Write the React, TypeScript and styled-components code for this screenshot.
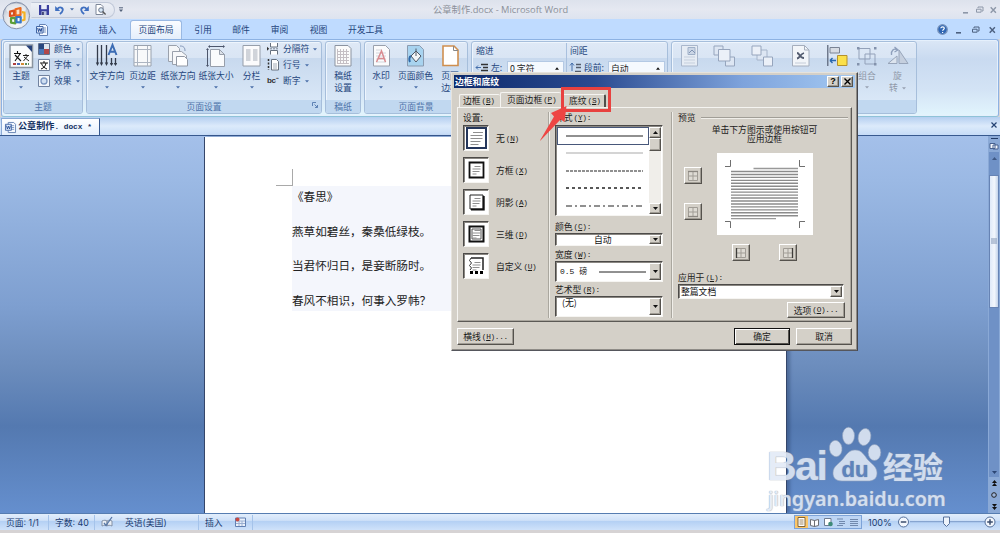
import React from 'react';
import styled, { createGlobalStyle, css } from 'styled-components';

const Global = createGlobalStyle`
  * { box-sizing: border-box; }
  body { margin: 0; overflow: hidden; background: #d8d6d8; }
  svg { display: block; flex: none; overflow: visible; }
`;

const cjk = `"Noto Sans CJK SC", sans-serif`;

/* ---------- window frame ---------- */
const Window = styled.div`
  position: relative;
  width: 1000px;
  height: 533px;
  display: flex;
  flex-direction: column;
  overflow: hidden;
  font: 8.8px/12px ${cjk};
  color: #24457c;
  white-space: nowrap;
`;
const TitleBar = styled.header`
  height: 19px;
  flex: none;
  display: flex;
  align-items: center;
  padding: 0 3px 0 31px;
  background: linear-gradient(#dde2ec, #e5e8f1 50%, #dde3ef);
`;
const QuickAccess = styled.div`
  width: 84px;
  height: 16px;
  display: flex;
  align-items: center;
  gap: 6px;
  padding: 0 7px;
  border: 1px solid #c0c8d8;
  border-left-color: transparent;
  border-radius: 0 9px 9px 0;
  background: linear-gradient(#edf0f6, #dde2ed);
`;
const TitleText = styled.div`
  margin-left: 306px;
  font: 9.3px/12px "Open Sans", ${cjk};
  color: #8b9099;
  width: 137px;
`;
const WindowButtons = styled.div<{ $gap: number }>`
  margin-left: auto;
  display: flex;
  align-items: center;
  gap: ${p => p.$gap}px;
`;
const Orb = styled.div`
  position: absolute;
  left: 2px;
  top: 1px;
`;
const TabBar = styled.nav`
  height: 20px;
  flex: none;
  display: flex;
  align-items: center;
  padding: 1px 4px 0 36px;
  background: #bfdbff;
`;
const RibbonTab = styled.div<{ $w: number; $active?: boolean }>`
  width: ${p => p.$w}px;
  height: 19px;
  line-height: 17px;
  text-align: center;
  border: 1px solid transparent;
  border-bottom: 0;
  ${p => p.$active && css`
    background: linear-gradient(#fafcff, #e4eefb);
    border-color: #9ab9e3;
    border-radius: 3px 3px 0 0;
  `}
`;

/* ---------- ribbon ---------- */
const Ribbon = styled.section`
  height: 78px;
  flex: none;
  display: flex;
  gap: 3px;
  margin: 0 1px;
  padding: 1px 2px 2px 1px;
  border: 1px solid #8db2e3;
  border-bottom-color: #8fc3d8;
  border-radius: 3px;
  background: linear-gradient(#dbe7f6, #c9daf0 25%, #d3e3f5 65%, #e2f5fd);
  box-shadow: inset 0 0 0 1px #e5f0fc;
`;
const Group = styled.div<{ $w: number }>`
  width: ${p => p.$w}px;
  height: 73px;
  flex: none;
  display: flex;
  flex-direction: column;
  border: 1px solid #a6bedb;
  border-radius: 3px;
  background: linear-gradient(#dfe9f6, #d9e5f4 22%, #c8d9ee 23%, #dbe9f8 90%);
  box-shadow: inset 1px 1px 0 #eef5fd;
  overflow: hidden;
`;
const GroupBody = styled.div<{ $pad?: number }>`
  flex: 1;
  display: flex;
  align-items: flex-start;
  padding: 1px 0 0 ${p => p.$pad || 0}px;
`;
const GroupLabel = styled.div`
  height: 13px;
  flex: none;
  display: flex;
  justify-content: center;
  position: relative;
  line-height: 13px;
  color: #4e74aa;
  background: #c1d8f0;
`;
const Launcher = styled.span`
  position: absolute;
  right: 3px;
  top: 2px;
`;
const BigButton = styled.div<{ $w: number; $muted?: boolean }>`
  width: ${p => p.$w}px;
  flex: none;
  display: flex;
  flex-direction: column;
  align-items: center;
  color: ${p => (p.$muted ? '#9099a8' : '#24457c')};
`;
const IconBox = styled.div`
  height: 26px;
  display: flex;
  align-items: center;
  margin-bottom: 1px;
`;
const SmallStack = styled.div`
  display: flex;
  flex-direction: column;
  gap: 4px;
`;
const SmallButton = styled.div`
  display: flex;
  align-items: center;
  height: 12px;
  gap: 4px;
`;
const ArrowGap = styled.div`
  height: 11px;
  display: flex;
  align-items: center;
`;
const SpacingBlock = styled.div<{ $w: number; $rule?: boolean }>`
  width: ${p => p.$w}px;
  height: 60px;
  padding: 2px 0 0 3px;
  border-left: 1px solid ${p => (p.$rule ? '#a9c0de' : 'transparent')};
`;
const FieldRow = styled.div`
  display: flex;
  align-items: center;
  margin-top: 4px;
  gap: 3px;
`;
const SpinField = styled.div`
  width: 57px;
  height: 13px;
  margin-left: auto;
  margin-right: 2px;
  display: flex;
  justify-content: space-between;
  align-items: center;
  padding: 2px 4px 0 2px;
  color: #222;
  background: #f5f9fe;
  border: 1px solid #b4c9e4;
`;

/* ---------- document tab strip ---------- */
const DocTabs = styled.div`
  height: 19px;
  flex: none;
  display: flex;
  align-items: flex-end;
  justify-content: space-between;
  padding: 0 3px 0 1px;
  border-bottom: 1px solid #37598f;
  background: linear-gradient(#b5cff0, #dceafb 50%, #c6dcf7);
`;
const DocTab = styled.div`
  width: 99px;
  height: 17px;
  display: flex;
  align-items: center;
  gap: 2px;
  padding-left: 3px;
  font: bold 9.1px/14px "Liberation Mono", ${cjk};
  color: #13305f;
  background: linear-gradient(#ffffff, #e4effd);
  border: 1px solid #8aa9d6;
  border-right: 1px solid #35588f;
  border-bottom: 0;
`;
const DocExt = styled.span`
  font-size: 7.8px;
  white-space: pre;
`;
const CloseDoc = styled.div`
  padding-bottom: 7px;
`;

/* ---------- workspace ---------- */
const Workspace = styled.main`
  flex: 1;
  display: flex;
  justify-content: space-between;
  padding-left: 204px;
  background: linear-gradient(#a4c0ea, #9bb9e4 12%, #7e9fd0 45%, #6c8dbd 61%, #5479b0 77%, #658fce);
`;
const Page = styled.article`
  width: 583px;
  margin-top: 1px;
  padding: 32px 0 0 71px;
  background: #fff;
  border-left: 1px solid #35466a;
  border-right: 1px solid #35466a;
  box-shadow: 3px 0 3px rgba(30, 50, 90, 0.35);
`;
const MarginMark = styled.div`
  width: 17px;
  height: 17px;
  border-right: 1px solid #a9a9a9;
  border-bottom: 1px solid #a9a9a9;
`;
const Poem = styled.div`
  width: 420px;
  height: 125px;
  margin-left: 16px;
  display: flex;
  flex-direction: column;
  gap: 14.7px;
  font: 11.6px/20px ${cjk};
  color: #222;
  background: #f4f6fc;
`;
const VScroll = styled.aside`
  width: 12px;
  display: flex;
  flex-direction: column;
  align-items: center;
  padding-top: 2px;
  background: #8aa9d6;
`;
const SplitHandle = styled.div`
  width: 7px;
  height: 1px;
  background: #223c68;
`;
const Track = styled.div`
  width: 10px;
  flex: 1;
  display: flex;
  flex-direction: column;
  align-items: center;
  justify-content: space-between;
  padding: 5px 0 3px;
  background: #6f91c6;
`;
const Thumb = styled.div`
  width: 10px;
  height: 133px;
  margin: 15px 0 auto;
  display: flex;
  flex-direction: column;
  align-items: center;
  justify-content: center;
  border: 1px solid #6683b4;
  background: linear-gradient(90deg, #dfe9f8, #f2f6fc 55%, #c3d3ea);
`;
const BrowseKeys = styled.div`
  height: 36px;
  width: 12px;
  display: flex;
  flex-direction: column;
  align-items: center;
  justify-content: space-around;
`;

/* ---------- status bar ---------- */
const StatusBar = styled.footer`
  height: 17px;
  flex: none;
  display: flex;
  align-items: center;
  color: #1b3c70;
  border-top: 1px solid #567db1;
  background: linear-gradient(#e2eefc, #cfe1f8 40%, #b4d0f4 45%, #cfe2fa);
`;
const StatusCell = styled.div<{ $w: number; $pad?: number }>`
  width: ${p => p.$w}px;
  height: 15px;
  display: flex;
  align-items: center;
  padding-left: ${p => p.$pad ?? 6}px;
  font: 8.8px/13px Inter, ${cjk};
  border-right: 1px solid #a5c3ea;
`;
const ViewButtons = styled.div`
  width: 68px;
  height: 14px;
  margin-left: auto;
  display: flex;
  align-items: center;
  border: 1px solid #7da3d8;
  background: #bdd5f4;
`;
const ViewButton = styled.div<{ $on?: boolean }>`
  flex: 1;
  height: 12px;
  display: flex;
  align-items: center;
  justify-content: center;
  background: ${p => (p.$on ? '#fbc66a' : 'transparent')};
`;
const ZoomArea = styled.div`
  width: 138px;
  display: flex;
  align-items: center;
  padding-left: 6px;
  font: 9px/13px Inter, sans-serif;
  gap: 5px;
`;
const BottomEdge = styled.div`
  height: 3px;
  flex: none;
  background: #d6d3d4;
`;

/* ---------- dialog ---------- */
const raised = css`
  border: 1px solid;
  border-color: #fff #55524d #55524d #fff;
  box-shadow: inset -1px -1px 0 #a09c94;
`;
const sunken = css`
  border: 1px solid;
  border-color: #4c4a48 #f6f5f2 #f6f5f2 #4c4a48;
  box-shadow: inset 1px 1px 0 #8a8782;
`;
const Dialog = styled.div`
  position: absolute;
  left: 451px;
  top: 72px;
  width: 407px;
  height: 279px;
  padding: 2px 2px 0;
  color: #1c1b1a;
  background: #d4d0c8;
  border: 1px solid;
  border-color: #e6e3dd #45464c #55565c #e6e3dd;
  box-shadow: inset -1px -1px 0 #8f8c87;
`;
const DialogTitle = styled.div`
  height: 13px;
  width: 401px;
  display: flex;
  align-items: center;
  gap: 2px;
  padding: 0 2px 0 1px;
  font-weight: 700;
  line-height: 12px;
  color: #fff;
  background: linear-gradient(90deg, #0d2a6c, #2a4a90 35%, #7ea3dc 72%, #a4c9f2);
`;
const DialogName = styled.span`
  margin-right: auto;
`;
const CaptionButton = styled.div`
  width: 12px;
  height: 11px;
  display: flex;
  align-items: center;
  justify-content: center;
  font: bold 9px/9px "Liberation Sans", sans-serif;
  color: #000;
  background: #d4d0c8;
  ${raised}
`;
const DialogTabs = styled.div`
  display: flex;
  align-items: flex-end;
  height: 19px;
  padding-left: 5px;
`;
const DialogTab = styled.div<{ $w: number; $active?: boolean; $last?: boolean }>`
  width: ${p => p.$w}px;
  height: ${p => (p.$active ? 15 : 13)}px;
  padding: ${p => (p.$active ? 1 : 0)}px 0 0 ${p => (p.$active ? 6 : p.$last ? 7 : 3)}px;
  line-height: 11px;
  border: 1px solid #f5f4f1;
  border-bottom: 0;
  border-right: ${p => (p.$last ? '2px solid #504e4b' : '0')};
  border-radius: 2px 2px 0 0;
`;
const Key = styled.span`
  margin-left: 1px;
  font: 7.8px/8px "Liberation Mono", monospace;
  letter-spacing: -0.35px;
  vertical-align: 1px;
`;
const Pane = styled.div`
  width: 395px;
  height: 215px;
  margin-left: 3px;
  display: flex;
  padding-top: 4px;
  border: 1px solid;
  border-color: #f5f4f1 #5b5955 #5b5955 #f5f4f1;
  box-shadow: inset -1px -1px 0 #aaa69e;
`;
const Column = styled.div<{ $w: number; $pad: number; $rule?: boolean }>`
  width: ${p => p.$w}px;
  height: 206px;
  padding-left: ${p => p.$pad}px;
  line-height: 11px;
  border-right: ${p => (p.$rule ? '1px solid #aaa79f' : '0')};
  box-shadow: ${p => (p.$rule ? '1px 0 0 #f0eee9' : 'none')};
`;
const FieldLabel = styled.div<{ $h?: number }>`
  height: ${p => p.$h || 11}px;
  line-height: 11px;
`;
const SettingRow = styled.div`
  display: flex;
  align-items: center;
  gap: 7px;
  height: 32px;
`;
const SettingIcon = styled.div`
  width: 26px;
  height: 26px;
  display: flex;
  align-items: center;
  justify-content: center;
  background: #fff;
  ${sunken}
`;
const ListBox = styled.div`
  width: 108px;
  height: 91px;
  display: flex;
  margin: 2px 0 5px;
  padding: 1px;
  background: #fff;
  ${sunken}
`;
const StyleList = styled.div`
  flex: 1;
  display: flex;
  flex-direction: column;
`;
const StyleItem = styled.div<{ $selected?: boolean }>`
  height: 17.5px;
  flex: none;
  display: flex;
  align-items: center;
  justify-content: center;
  padding-left: 3px;
  border: 1px solid ${p => (p.$selected ? '#47577a' : 'transparent')};
`;
const ListScroll = styled.div`
  width: 12px;
  display: flex;
  flex-direction: column;
  background: #f0eeea;
`;
const ScrollPart = styled.div<{ $h: number; $bottom?: boolean }>`
  height: ${p => p.$h}px;
  margin-top: ${p => (p.$bottom ? 'auto' : '0')};
  display: flex;
  align-items: center;
  justify-content: center;
  background: #d4d0c8;
  ${raised}
`;
const Combo = styled.div<{ $w: number; $h: number; $mb?: number }>`
  width: ${p => p.$w}px;
  height: ${p => p.$h}px;
  margin: 1px 0 ${p => p.$mb || 0}px;
  display: flex;
  padding: 1px;
  color: #111;
  background: #fff;
  ${sunken}
`;
const ComboValue = styled.div<{ $pad: number; $top?: boolean }>`
  flex: 1;
  display: flex;
  align-items: ${p => (p.$top ? 'flex-start' : 'center')};
  padding-left: ${p => p.$pad}px;
  line-height: 10px;
`;
const ComboButton = styled.div`
  width: 12px;
  display: flex;
  align-items: center;
  justify-content: center;
  background: #d4d0c8;
  ${raised}
`;
const WidthText = styled.span`
  font: 8px/10px "Liberation Mono", ${cjk};
  margin-right: 12px;
`;
const PreviewHead = styled.div`
  display: flex;
  align-items: center;
  gap: 5px;
  width: 170px;
`;
const Rule = styled.div`
  flex: 1;
  height: 2px;
  border-top: 1px solid #a19e97;
  border-bottom: 1px solid #f0eee9;
`;
const Hint = styled.div`
  width: 170px;
  margin-top: 2px;
  text-align: center;
  line-height: 9px;
  padding-left: 3px;
`;
const PreviewGrid = styled.div`
  display: grid;
  grid-template-columns: 39px 96px;
  margin: 10px 0 0;
`;
const SideButtons = styled.div`
  display: flex;
  flex-direction: column;
  gap: 19px;
  padding: 14px 0 0 6px;
`;
const EdgeButton = styled.div`
  width: 18px;
  height: 17px;
  display: flex;
  align-items: center;
  justify-content: center;
  ${raised}
`;
const Sheet = styled.div`
  width: 96px;
  height: 82px;
  background: #fff;
`;
const BelowButtons = styled.div`
  grid-column: 2;
  display: flex;
  gap: 29px;
  padding: 9px 0 0 15px;
`;
const ApplyLabel = styled.div`
  height: 11px;
  margin-top: 11px;
`;
const PushButton = styled.div<{ $w: number; $h: number; $default?: boolean }>`
  width: ${p => p.$w}px;
  height: ${p => p.$h}px;
  display: flex;
  align-items: center;
  justify-content: center;
  line-height: 11px;
  ${raised}
  ${p => p.$default && css`
    border-color: #111;
    box-shadow: inset 1px 1px 0 #fff, inset -1px -1px 0 #55524d;
  `}
`;
const OptionsRow = styled.div`
  display: flex;
  justify-content: flex-end;
  width: 167px;
  margin-top: 3px;
`;
const DialogFooter = styled.div`
  display: flex;
  gap: 6px;
  padding: 6px 0 0 3px;
`;
const FooterSpace = styled.div`
  flex: 0 0 208px;
`;

/* ---------- overlays ---------- */
const Highlight = styled.div`
  position: absolute;
  left: 561px;
  top: 87px;
  width: 50px;
  height: 25px;
  border: 3px solid #e8413f;
`;
const Pointer = styled.div`
  position: absolute;
  left: 538px;
  top: 104px;
`;
const Watermark = styled.div`
  position: absolute;
  left: 767px;
  top: 420px;
  width: 184px;
  color: #e2eaf6;
  opacity: 0.88;
  text-shadow: 0 0 1px #8f9cb0, 0 0 1px #a9b3c2;
`;
const BrandRow = styled.div`
  display: flex;
  align-items: flex-end;
  height: 62px;
`;
const BrandLatin = styled.span`
  width: 62px;
  font: bold 41px/44px "Liberation Sans", sans-serif;
  letter-spacing: -1.5px;
  margin-bottom: -6px;
`;
const BrandHan = styled.span`
  margin-left: 2px;
  font: bold 30px/34px ${cjk};
`;
const BrandUrl = styled.div`
  padding-left: 1px;
  font: 600 19.8px/24px "Noto Sans", sans-serif;
  margin-top: 5px;
`;

/* ---------- drawings ---------- */
const Caret = ({ c = '#4a6ea8' }: { c?: string }) => (
  <svg width="4" height="3" viewBox="0 0 4 3"><path d="M0 .3h4L2 2.6z" fill={c} /></svg>
);
const Tri = ({ up, w = 5, c = '#111' }: { up?: boolean; w?: number; c?: string }) => (
  <svg width={w} height="3" viewBox="0 0 5 3"><path d={up ? 'M0 3h5L2.5 0z' : 'M0 0h5L2.5 3z'} fill={c} /></svg>
);
const MinMaxClose = ({ c, gap }: { c: string; gap: number }) => (
  <>
    <svg width="6" height="8"><path d="M0 6.8h5" stroke={c} strokeWidth="1.6" /></svg>
    <svg width="7" height="8" fill="none" stroke={c} style={{ marginLeft: gap }}><path d="M2 2V1h5v4H6" /><path d="M.5 3.2h4.6v3H.5z" /></svg>
    <svg width="7" height="8" stroke={c} strokeWidth="1.4" style={{ marginLeft: gap }}><path d="M.7 1.2l5.2 5.6M5.9 1.2L.7 6.8" /></svg>
  </>
);
const OfficeOrb = () => (
  <svg width="29" height="29" viewBox="0 0 29 29">
    <defs>
      <radialGradient id="orb" cx=".5" cy=".75" r=".75">
        <stop offset="0" stopColor="#fff" /><stop offset=".6" stopColor="#dde1e8" /><stop offset="1" stopColor="#a9b2c2" />
      </radialGradient>
    </defs>
    <circle cx="14.3" cy="14.5" r="13.3" fill="url(#orb)" stroke="#8692ab" strokeWidth="1" />
    <ellipse cx="14" cy="8" rx="10" ry="5.5" fill="#fff" opacity=".55" />
    <g fill="none" strokeWidth="2.2" strokeLinejoin="round">
      <path d="M13.500 8.200l5-1.200v7l-5 .8z" stroke="#ec6a1e" fill="#fbe0c8" />
      <path d="M8 10.600l4-1v4.800l-4 .6z" stroke="#d9501e" />
      <path d="M9 17.200h4.300v5.200L9 21.600z" stroke="#5d9f37" />
      <path d="M14.500 16h4.200v5.400l-4.200-.2z" stroke="#3977c6" />
      <path d="M19.800 11.200l2.700.5v7l-2.500.8" stroke="#f4b324" />
    </g>
  </svg>
);
const SaveIcon = () => (
  <svg width="10" height="10"><path d="M0 0h10v10H0z" fill="#3a3f9e" /><path d="M2.200 0h5.600v4.200H2.200z" fill="#e9edf8" /><path d="M2.500 6.200h5V10h-5z" fill="#b9c2dd" /><path d="M3.200 7h1.500v3H3.200z" fill="#22265f" /></svg>
);
const UndoIcon = ({ flip }: { flip?: boolean }) => (
  <svg width="9" height="10" viewBox="0 0 9 10"><g transform={flip ? 'translate(9 0) scale(-1 1)' : undefined}><path d="M2.200 4.200C4.600 1 8.400 2.600 7.700 5.400 7.400 7 6.300 8 4.800 9" fill="none" stroke="#3f6fc0" strokeWidth="1.800" /><path d="M.200 1v5h5z" fill="#3f6fc0" /></g></svg>
);
const PreviewIcon = () => (
  <svg width="11" height="11"><path d="M1 .500h5l2 2v8H1z" fill="#fff" stroke="#7d8799" /><circle cx="6" cy="6" r="2.300" fill="#d9e9f7" stroke="#69758b" /><path d="M7.600 7.600l3 2.800" stroke="#555" strokeWidth="1.400" /></svg>
);
const WordIcon = ({ s = 12 }: { s?: number }) => (
  <svg width={s} height={s} viewBox="0 0 12 12"><path d="M3.500.500h6l2 2v9h-8z" fill="#f5f9ff" stroke="#6482b4" /><path d="M7 4h3M7 6h3M7 8h3" stroke="#7d99c4" /><path d="M.500 2.500h6.500v6.500H.5z" fill="#e1ecfb" stroke="#4267a6" /><path d="M1.700 4l.9 3.600 1.200-3 1.200 3L5.900 4" fill="none" stroke="#244a92" strokeWidth="1" /></svg>
);
const ThemeIcon = () => (
  <svg width="25" height="25"><path d="M1 1h22.500v22.500H1z" fill="#fbfcfd" stroke="#8a949f" strokeWidth="1.500" /><path d="M17 1.500h6V8z" fill="#27427b" /><path d="M5 9.500h7M8.500 7v2.500M6 17l5-7M6 11l6 6" stroke="#111" fill="none" strokeWidth="1.100" /><path d="M14 11.500h6M17 10v1.500M14.500 17l4-5M15 13l5 4" stroke="#222" fill="none" /><path d="M4 20h3" stroke="#b04040" strokeWidth="2" /><path d="M8 20h3" stroke="#476bb5" strokeWidth="2" /><path d="M12 20h3" stroke="#d38a34" strokeWidth="2" /><path d="M16 20h4" stroke="#5c8f5c" strokeWidth="2" strokeDasharray="2 1" /></svg>
);
const ColorsIcon = () => (
  <svg width="12" height="12"><path d="M.500.500h11v11H.5z" fill="#fff" stroke="#61718f" /><path d="M1 1h5v5H1z" fill="#28477f" /><path d="M6 1h5v5H6z" fill="#dfe6ee" /><path d="M1 6h5v5H1z" fill="#4978b8" /><path d="M6 6h5v5H6z" fill="#b2474a" /></svg>
);
const FontsIcon = () => (
  <svg width="12" height="12"><path d="M.500.500h11v11H.5z" fill="#fff" stroke="#71829f" /><path d="M2 4h8M6 2v2M3 10c3-1 4.500-3 5-6M3.500 4.500c1 3 3 4.500 5.500 5.500" fill="none" stroke="#111" /></svg>
);
const EffectsIcon = () => (
  <svg width="12" height="12"><path d="M.500.500h11v11H.5z" fill="#f2f6fb" stroke="#71829f" /><circle cx="6" cy="6" r="3" fill="#cfdff2" stroke="#7894bf" strokeWidth="1.300" /></svg>
);
const DirectionIcon = () => (
  <svg width="22" height="24"><path d="M1.500 1v18M5.500 1v18M10.500 1v18M15.500 14v7M19.500 14v7" stroke="#333b4a" strokeWidth="1.300" /><path d="M-.2 18.500h3.400L1.500 22zM3.800 18.500h3.400L5.500 22zM8.800 18.500h3.400L10.500 22zM13.800 19h3.400l-1.700 3zM17.800 19h3.400l-1.700 3z" fill="#333b4a" /><path d="M12.500 11L16.500 1l4 10M14 7.800h5" fill="none" stroke="#3d6db4" strokeWidth="2" /></svg>
);
const MarginsIcon = () => (
  <svg width="19" height="22"><path d="M1 .500h17v20.500H1z" fill="#f8f9fa" stroke="#9aa2ae" /><path d="M4.500 1v20M14.500 1v20M1 4.500h17M1 17.500h17" stroke="#adb5c1" /></svg>
);
const OrientIcon = () => (
  <svg width="22" height="22"><path d="M1.500.500h8l3 3v13h-11z" fill="#f4f6f8" stroke="#9aa1ac" /><path d="M5.500 6.500h9l5 4v9h-14z" fill="#f7f8fa" stroke="#9aa1ac" /><path d="M9.500 11.500h8l3 3v6.500h-11z" fill="#fff" stroke="#9299a5" /><path d="M13 1c4 0 5 2 5 5" fill="none" stroke="#8497b8" /></svg>
);
const SizeIcon = () => (
  <svg width="20" height="23"><path d="M4 1.500h14M1.500 4v17" stroke="#4c566c" /><path d="M2 1.500l2-1.500v3zM19 1.500L17 0v3zM1.500 3L0 5h3zM1.500 22L0 20h3z" fill="#4c566c" /><path d="M4.500 4.500h9l5 5v12h-14z" fill="#fafbfc" stroke="#979eaa" /><path d="M13.500 4.500v5h5z" fill="#dce1e8" stroke="#979eaa" /></svg>
);
const ColumnsIcon = () => (
  <svg width="19" height="22"><path d="M1 .500h17v20.500H1z" fill="#fbfbfc" stroke="#969eaa" /><path d="M4 5h4.500M4 7h4.500M4 9h4.500M4 11h4.500M4 13h4.500M4 15h4.500M11 5h4.500M11 7h4.500M11 9h4.500M11 11h4.500M11 13h4.500M11 15h4.500" stroke="#a6adb8" /></svg>
);
const BreakIcon = () => (
  <svg width="12" height="12"><path d="M3.500 0v4h7V0M3.500 11.500V7.500h7v4" fill="#fff" stroke="#66717f" /><path d="M3 5.800h9" stroke="#7f8895" strokeDasharray="2 1" /><path d="M0 3.800v4l2.200-2z" fill="#333" /></svg>
);
const LineNoIcon = () => (
  <svg width="12" height="12"><path d="M4.500.500h5l2 2v8.500h-7z" fill="#fff" stroke="#66717f" /><path d="M6 5h4M6 7h4M6 9h4" stroke="#a4adb9" /><path d="M1.500 0v11" stroke="#333" strokeDasharray="2 1.500" strokeWidth="1.500" /></svg>
);
const Hyphen = styled.span`
  width: 12px;
  font: bold 8px/10px "Liberation Sans", sans-serif;
  letter-spacing: -0.4px;
  color: #333;
`;
const GridPaperIcon = () => (
  <svg width="18" height="22"><path d="M1 .500h13l3 3v17.500H1z" fill="#fbfbfb" stroke="#8b93a0" /><path d="M3 6.500h12M3 9.500h12M3 12.500h12M3 15.500h12M3 18.500h12M3.500 4v14M6.500 4v14M9.500 4v14M12.500 4v14" stroke="#c5bfc4" /></svg>
);
const WatermarkIcon = () => (
  <svg width="17" height="22"><path d="M.500.500h12l4 4v16.500H.5z" fill="#fbfbfc" stroke="#99a0ac" /><path d="M3 5h6M3 8h10M3 11h10M3 14h10M3 17h10" stroke="#d1d5da" /><path d="M3.500 17L8.500 6l4 11M5 13.500h6" fill="none" stroke="#d98b90" strokeWidth="1.500" /></svg>
);
const PageColorIcon = () => (
  <svg width="17" height="22"><path d="M.500.500h12l4 4v16.500H.5z" fill="#a8d3ef" stroke="#8b9bb0" /><path d="M4 11l5-5 5 5-5 6z" fill="#f3f5f7" stroke="#4f5866" /><path d="M9 11V3.500" stroke="#4f5866" /><path d="M4 11c-2 1-2 4-1 6" stroke="#2e68a8" strokeWidth="2" fill="none" /></svg>
);
const BorderPageIcon = () => (
  <svg width="17" height="22"><path d="M1 1h11l4 4v15.500H1z" fill="#fff" stroke="#cf8f4f" strokeWidth="1.600" /><path d="M11.500 1v4.500H16" fill="none" stroke="#888" /></svg>
);
const IndentIcon = () => (
  <svg width="12" height="10"><path d="M5 1.500h7M7 4.500h5M5 7.500h7" stroke="#333" strokeWidth="1.600" /><path d="M0 4.500h5M0 4.500l2-2M0 4.500l2 2" stroke="#456fab" /></svg>
);
const BeforeIcon = () => (
  <svg width="11" height="10"><path d="M6 1.500h5M6 4.500h5M5 8.500h6" stroke="#555d6b" strokeWidth="1.600" /><path d="M2 0v8M2 0L0 2.500M2 0l2 2.500" stroke="#456fab" fill="none" /></svg>
);
const PositionIcon = () => (
  <svg width="17" height="22"><path d="M.500.500h16v20.500H.5z" fill="#e6ecf4" stroke="#a9b7cc" /><path d="M7 2.500h7v7H7z" fill="#cbd6e6" stroke="#9fb0c8" /><path d="M8 8l3-3 3 3" stroke="#8093b2" fill="none" /><path d="M3 12h11M3 15h11M3 18h11" stroke="#c5cfdd" /></svg>
);
const StackIcon = () => (
  <svg width="23" height="23"><path d="M1 1h9v9H1zM12.500 12h9v9h-9z" fill="#dde6f3" stroke="#96a5bd" /><path d="M5.500 4.500h11.500v11.500H5.500z" fill="#ebf0f8" stroke="#96a5bd" /></svg>
);
const BackIcon = () => (
  <svg width="23" height="23"><path d="M6 5h10v10H6z" fill="#dde6f3" stroke="#a6b4ca" /><path d="M1 1h9v9H1zM12.500 12h9v9h-9z" fill="#ebf0f8" stroke="#96a5bd" /></svg>
);
const WrapIcon = () => (
  <svg width="18" height="22"><path d="M.500.500h12l4.500 4.500v16H.5z" fill="#f2f5f9" stroke="#a5aebd" /><path d="M12.500.500V5H17" fill="none" stroke="#a5aebd" /><path d="M5 8c3 0 2 5 7 5M5 13.500C8 13 8 9 12 8" stroke="#535c70" strokeWidth="1.800" fill="none" /><path d="M3 18h11" stroke="#c4ccd8" /></svg>
);
const AlignIcon = () => (
  <svg width="21" height="22"><path d="M.800 0v21" stroke="#555f73" strokeWidth="1.200" /><path d="M3 2.500h9.500v5.500H3z" fill="#d7dce4" stroke="#7a8394" /><path d="M10.500 10.500h9.500v10h-9.500z" fill="#fbe04a" stroke="#b4912c" /><path d="M3 15.500h6M3 15.500l2.500-2.500M3 15.500l2.500 2.500" stroke="#2a67ad" strokeWidth="1.400" /></svg>
);
const GroupIcon = () => (
  <svg width="20" height="21"><path d="M2 2.500h11v10.500H2zM8 8h10v10H8z" fill="none" stroke="#93a1b9" /><path d="M0 1h2.500v2.500H0zM17 1h2.500v2.500H17zM0 17h2.500v2.500H0zM17 17h2.500v2.500H17z" fill="#8392ac" /></svg>
);
const RotateIcon = () => (
  <svg width="22" height="21"><path d="M1 17.500L10 10v7.500z" fill="#dce4ee" stroke="#98a5ba" /><path d="M12 17.500V4l9 13.500z" fill="#c5cfde" stroke="#98a5ba" /><path d="M4.500 9C4 4 7 2 10.500 4M7.500 1l3.500 3-3.500 2" stroke="#8fa0bc" fill="none" strokeWidth="1.300" /></svg>
);
const HelpIcon = () => (
  <svg width="11" height="11"><circle cx="5.500" cy="5.500" r="4.800" fill="#2f66b4" stroke="#7b96be" strokeWidth="1.300" /><path d="M3.800 4.300c.2-2 3.500-2 3.500 0 0 1.100-1.700 1.300-1.700 2.500M5.600 8v1.100" stroke="#fff" strokeWidth="1.200" fill="none" /></svg>
);
const SettingArt = ({ kind }: { kind: number }) => (
  <svg width="19" height="20" viewBox="0 0 19 20" fill="none">
    {kind === 0 && <path d="M0 0h19v20H0z" stroke="#24365b" strokeWidth="2" />}
    {kind === 1 && <path d="M2.500 2.500h14v15h-14z" stroke="#111" strokeWidth="1.800" />}
    {kind === 2 && <><path d="M3 3h13v14H3z" stroke="#222" /><path d="M4 17.500h12.700V4" stroke="#111" strokeWidth="2" /></>}
    {kind === 3 && <><path d="M2.500 2.500h14v15h-14z" stroke="#111" strokeWidth="2" /><path d="M5 5h9v10H5z" stroke="#555" /></>}
    {kind === 4 && <><path d="M4 2h12v12" stroke="#222" strokeWidth="1.500" /><path d="M4 2L2.500 4.500 4.500 7 2.500 9.500 4.500 12 3 14" stroke="#333" /><path d="M3 16.500h14" stroke="#000" strokeWidth="3" strokeDasharray="3 2" /></>}
    <path d={kind === 0 ? 'M6 4.500h10M3.500 7.500h12M3.500 10.500h12M3.500 13.500h10M3.500 16.500h8' : 'M7.500 6.500h6M5.500 9h8M5.500 11.500h7M5.500 14h4'} stroke="#8f8f8f" strokeWidth="1.100" />
  </svg>
);
const EdgeArt = ({ side }: { side: 't' | 'b' | 'l' | 'r' }) => {
  const strong = { t: 'M0 .500h10', b: 'M0 9.500h10', l: 'M.500 0v10', r: 'M9.500 0v10' }[side];
  const vertical = side === 'l' || side === 'r';
  return (
    <svg width="10" height="10"><path d="M.500.500h9v9h-9zM5 1v8M1 5h8" fill="#dedbd4" stroke="#a19d96" /><path d={strong} stroke={vertical ? '#3f3d3a' : '#8b8781'} strokeWidth="1.300" /></svg>
  );
};
const SheetArt = () => (
  <svg width="96" height="82" stroke="#6f6f6f">
    <path d="M8 13.500h5.500V7M88 13.500h-5.500V7M8 68.500h5.500V75M88 68.500h-5.500V75" fill="none" />
    <path d="M36.500 15.500H81" stroke="#999" strokeWidth="1.300" />
    {Array.from({ length: 16 }, (_, i) => (
      <path key={i} d={`M14 ${18.5 + i * 2.95}H81`} stroke="#8b8b8b" strokeWidth="1.400" />
    ))}
    <path d="M14 65.700H59" stroke="#999" strokeWidth="1.300" />
  </svg>
);
const Paw = () => (
  <svg width="52" height="57" viewBox="0 0 52 57">
    <g fill="#e2eaf6" stroke="#98a6bd" strokeWidth=".6">
      <ellipse cx="6.700" cy="23.500" rx="6.300" ry="8.200" transform="rotate(-8 6.700 23.500)" />
      <ellipse cx="19.500" cy="10.800" rx="6" ry="8.600" />
      <ellipse cx="35.500" cy="12" rx="6.300" ry="8.600" transform="rotate(12 35.500 12)" />
      <ellipse cx="45.500" cy="27.500" rx="6.300" ry="8" />
      <path d="M26 25c7 0 9 5 13 10 4 4 9 7 9 13s-4 8-9 8H13c-6 0-9-3-9-8 0-7 6-9 10-14 3-4 6-9 12-9z" />
    </g>
    <text x="26" y="52" textAnchor="middle" fontFamily="Liberation Sans" fontWeight="700" fontSize="22" fill="#5f84bd">du</text>
  </svg>
);

/* ---------- data ---------- */
const settings: [string, string][] = [['无', 'N'], ['方框', 'X'], ['阴影', 'A'], ['三维', 'D'], ['自定义', 'U']];
const dashes = ['none', 'none', '3 1', '3 3', '6 3 2 3'];
const poem = ['《春思》', '燕草如碧丝，秦桑低绿枝。', '当君怀归日，是妾断肠时。', '春风不相识，何事入罗帏？'];

const Mnemonic = ({ k, tail = '' }: { k: string; tail?: string }) => <Key>(<u>{k}</u>){tail}</Key>;

const Big = ({ w, icon, text, second, muted }: { w: number; icon: React.ReactNode; text?: string; second?: React.ReactNode; muted?: boolean }) => (
  <BigButton $w={w} $muted={muted}>
    <IconBox>{icon}</IconBox>
    {text && <span>{text}</span>}
    {second}
    {text && !second && <ArrowGap><Caret c={muted ? '#98a2b3' : undefined} /></ArrowGap>}
  </BigButton>
);

function RibbonBar() {
  return (
    <Ribbon>
      <Group $w={80}>
        <GroupBody>
          <Big w={34} icon={<ThemeIcon />} text="主题" />
          <SmallStack>
            <SmallButton><ColorsIcon />颜色<Caret /></SmallButton>
            <SmallButton><FontsIcon />字体<Caret /></SmallButton>
            <SmallButton><EffectsIcon />效果<Caret /></SmallButton>
          </SmallStack>
        </GroupBody>
        <GroupLabel>主题</GroupLabel>
      </Group>
      <Group $w={236}>
        <GroupBody $pad={2}>
          <Big w={36} icon={<DirectionIcon />} text="文字方向" />
          <Big w={35} icon={<MarginsIcon />} text="页边距" />
          <Big w={36} icon={<OrientIcon />} text="纸张方向" />
          <Big w={40} icon={<SizeIcon />} text="纸张大小" />
          <Big w={31} icon={<ColumnsIcon />} text="分栏" />
          <SmallStack>
            <SmallButton><BreakIcon />分隔符<Caret /></SmallButton>
            <SmallButton><LineNoIcon />行号<Caret /></SmallButton>
            <SmallButton><Hyphen>bc⁻</Hyphen>断字<Caret /></SmallButton>
          </SmallStack>
        </GroupBody>
        <GroupLabel>页面设置<Launcher><svg width="6" height="6"><path d="M.500 4V.500H4M2.500 2.500l3 3M5.500 3v2.500H3" fill="none" stroke="#5f83b5" /></svg></Launcher></GroupLabel>
      </Group>
      <Group $w={36}>
        <GroupBody><Big w={34} icon={<GridPaperIcon />} text="稿纸" second={<span>设置</span>} /></GroupBody>
        <GroupLabel>稿纸</GroupLabel>
      </Group>
      <Group $w={104}>
        <GroupBody>
          <Big w={32} icon={<WatermarkIcon />} text="水印" />
          <Big w={37} icon={<PageColorIcon />} text="页面颜色" />
          <Big w={32} icon={<BorderPageIcon />} text="页面" second={<span>边框</span>} />
        </GroupBody>
        <GroupLabel>页面背景</GroupLabel>
      </Group>
      <Group $w={197}>
        <GroupBody>
          <SpacingBlock $w={94}>
            缩进
            <FieldRow><IndentIcon /> 左:<SpinField>0 字符<Tri up w={4} /></SpinField></FieldRow>
          </SpacingBlock>
          <SpacingBlock $w={101} $rule>
            间距
            <FieldRow><BeforeIcon /> 段前:<SpinField>自动<Tri up w={4} /></SpinField></FieldRow>
          </SpacingBlock>
        </GroupBody>
        <GroupLabel>段落</GroupLabel>
      </Group>
      <Group $w={246}>
        <GroupBody>
          <Big w={34} icon={<PositionIcon />} />
          <Big w={36} icon={<StackIcon />} />
          <Big w={40} icon={<BackIcon />} />
          <Big w={38} icon={<WrapIcon />} />
          <Big w={34} icon={<AlignIcon />} />
          <Big w={26} icon={<GroupIcon />} text="组合" muted />
          <Big w={35} icon={<RotateIcon />} text="旋" muted second={<SmallButton>转<Caret c="#98a2b3" /></SmallButton>} />
        </GroupBody>
        <GroupLabel>排列</GroupLabel>
      </Group>
    </Ribbon>
  );
}

function BordersDialog() {
  return (
    <Dialog>
      <DialogTitle>
        <DialogName>边框和底纹</DialogName>
        <CaptionButton>?</CaptionButton>
        <CaptionButton><svg width="7" height="7" stroke="#000" strokeWidth="1.400"><path d="M.500.500l6 6M6.500.500l-6 6" /></svg></CaptionButton>
      </DialogTitle>
      <DialogTabs>
        <DialogTab $w={41}>边框<Mnemonic k="B" /></DialogTab>
        <DialogTab $w={61} $active>页面边框<Mnemonic k="P" /></DialogTab>
        <DialogTab $w={45} $last>底纹<Mnemonic k="S" /></DialogTab>
      </DialogTabs>
      <Pane>
        <Column $w={91} $pad={5} $rule>
          <FieldLabel $h={10}>设置:</FieldLabel>
          {settings.map(([label, key], i) => (
            <SettingRow key={key}>
              <SettingIcon><SettingArt kind={i} /></SettingIcon>
              <span>{label}<Mnemonic k={key} /></span>
            </SettingRow>
          ))}
        </Column>
        <Column $w={123} $pad={6} $rule>
          <FieldLabel>样式<Mnemonic k="Y" tail=":" /></FieldLabel>
          <ListBox>
            <StyleList>
              {dashes.map((d, i) => (
                <StyleItem key={i} $selected={i === 0}>
                  <svg width="77" height="2"><path d="M0 1h77" stroke={i === 1 ? '#aaa' : '#222'} strokeWidth={i === 3 ? 1.4 : 1.1} strokeDasharray={d} /></svg>
                </StyleItem>
              ))}
            </StyleList>
            <ListScroll>
              <ScrollPart $h={11}><Tri up /></ScrollPart>
              <ScrollPart $h={13} />
              <ScrollPart $h={11} $bottom><Tri /></ScrollPart>
            </ListScroll>
          </ListBox>
          <FieldLabel>颜色<Mnemonic k="C" tail=":" /></FieldLabel>
          <Combo $w={108} $h={13} $mb={3}><ComboValue $pad={37}>自动</ComboValue><ComboButton><Tri /></ComboButton></Combo>
          <FieldLabel>宽度<Mnemonic k="W" tail=":" /></FieldLabel>
          <Combo $w={108} $h={21} $mb={2}>
            <ComboValue $pad={3}><WidthText>0.5 磅</WidthText><svg width="47" height="2"><path d="M0 1h47" stroke="#222" /></svg></ComboValue>
            <ComboButton><Tri /></ComboButton>
          </Combo>
          <FieldLabel>艺术型<Mnemonic k="R" tail=":" /></FieldLabel>
          <Combo $w={108} $h={21}><ComboValue $pad={5} $top>(无)</ComboValue><ComboButton><Tri /></ComboButton></Combo>
        </Column>
        <Column $w={178} $pad={6}>
          <PreviewHead>预览<Rule /></PreviewHead>
          <Hint>单击下方图示或使用按钮可<br />应用边框</Hint>
          <PreviewGrid>
            <SideButtons><EdgeButton><EdgeArt side="t" /></EdgeButton><EdgeButton><EdgeArt side="b" /></EdgeButton></SideButtons>
            <Sheet><SheetArt /></Sheet>
            <BelowButtons><EdgeButton><EdgeArt side="l" /></EdgeButton><EdgeButton><EdgeArt side="r" /></EdgeButton></BelowButtons>
          </PreviewGrid>
          <ApplyLabel>应用于<Mnemonic k="L" tail=":" /></ApplyLabel>
          <Combo $w={166} $h={15}><ComboValue $pad={1}>整篇文档</ComboValue><ComboButton><Tri /></ComboButton></Combo>
          <OptionsRow><PushButton $w={58} $h={16}>选项<Mnemonic k="O" tail="..." /></PushButton></OptionsRow>
        </Column>
      </Pane>
      <DialogFooter>
        <PushButton $w={57} $h={17}>横线<Mnemonic k="H" tail="..." /></PushButton>
        <FooterSpace />
        <PushButton $w={56} $h={17} $default>确定</PushButton>
        <PushButton $w={56} $h={17}>取消</PushButton>
      </DialogFooter>
    </Dialog>
  );
}

export default function App() {
  return (
    <Window>
      <Global />
      <TitleBar>
        <QuickAccess><SaveIcon /><UndoIcon /><Caret /><UndoIcon flip /><PreviewIcon /></QuickAccess>
        <svg width="12" height="6"><path d="M4 .800h4" stroke="#526079" /><path d="M4 2.500h4L6 5z" fill="#526079" /></svg>
        <TitleText>公章制作.docx - Microsoft Word</TitleText>
        <WindowButtons $gap={0}><MinMaxClose c="#8d97a8" gap={7} /></WindowButtons>
      </TitleBar>
      <TabBar>
        <WordIcon />
        <RibbonTab $w={41}>开始</RibbonTab>
        <RibbonTab $w={37}>插入</RibbonTab>
        <RibbonTab $w={4} />
        <RibbonTab $w={52} $active>页面布局</RibbonTab>
        <RibbonTab $w={42}>引用</RibbonTab>
        <RibbonTab $w={34}>邮件</RibbonTab>
        <RibbonTab $w={43}>审阅</RibbonTab>
        <RibbonTab $w={35}>视图</RibbonTab>
        <RibbonTab $w={59}>开发工具</RibbonTab>
        <WindowButtons $gap={0}><HelpIcon /><svg width="8" height="8" /><MinMaxClose c="#4c607f" gap={10} /></WindowButtons>
      </TabBar>
      <RibbonBar />
      <DocTabs>
        <DocTab><WordIcon s={11} /><span>公章制作<DocExt>. docx *</DocExt></span></DocTab>
        <CloseDoc><svg width="6" height="6" stroke="#234273" strokeWidth="1.200"><path d="M.500.500l5 5M5.500.500l-5 5" /></svg></CloseDoc>
      </DocTabs>
      <Workspace>
        <Page>
          <MarginMark />
          <Poem>{poem.map(line => <span key={line}>{line}</span>)}</Poem>
        </Page>
        <VScroll>
          <SplitHandle />
          <svg width="10" height="13"><path d="M1 4.500h5v5H1zM4 6h5v4H4z" fill="#f3f7fc" stroke="#47618f" /></svg>
          <Track>
            <Tri up c="#3f5985" />
            <Thumb><svg width="6" height="7"><path d="M0 1h6M0 3h6M0 5h6" stroke="#8296b5" /></svg></Thumb>
            <Tri c="#2c4674" />
          </Track>
          <BrowseKeys>
            <svg width="5" height="6"><path d="M0 3h5L2.500 0zM0 6h5L2.500 3z" fill="#111" /></svg>
            <svg width="6" height="6"><circle cx="3" cy="3" r="2.300" fill="#9bb5dc" stroke="#222" /></svg>
            <svg width="5" height="6"><path d="M0 0h5L2.500 3zM0 3h5L2.500 6z" fill="#111" /></svg>
          </BrowseKeys>
        </VScroll>
      </Workspace>
      <StatusBar>
        <StatusCell $w={49}>页面: 1/1</StatusCell>
        <StatusCell $w={46}>字数: 40</StatusCell>
        <StatusCell $w={104}>
          <svg width="12" height="11"><path d="M1 4c2-1 4-1 5 0v5C5 8 3 8 1 9zM6 4c2-1 3-1 5 0v5C9 8 7 8 6 9z" fill="#e9eef5" stroke="#8290a5" /><path d="M3 6l2 2.500L11 0" stroke="#5676a6" strokeWidth="1.300" fill="none" /></svg>
          <StatusCell as="span" $w={80} $pad={12} style={{ border: 0 }}>英语(美国)</StatusCell>
        </StatusCell>
        <StatusCell $w={54}>
          插入
          <svg width="11" height="10" style={{ marginLeft: 12 }}><path d="M.500 1h10v8.500H.5z" fill="#eaf1fb" stroke="#6280b2" /><path d="M1 4h9M1 6.500h9M4 4v5M7 4v5" stroke="#9bb0d2" /><circle cx="2.500" cy="2.500" r="2" fill="#c84a42" /></svg>
        </StatusCell>
        <ViewButtons>
          <ViewButton $on><svg width="9" height="10"><path d="M1 .500h7v9H1z" fill="#fff" stroke="#806436" /><path d="M2.500 3h4M2.500 5h4M2.500 7h4" stroke="#a18a66" /></svg></ViewButton>
          <ViewButton><svg width="9" height="9"><path d="M.500 1.500L4.500 2.500v6L.500 7.500zM8.500 1.500L4.500 2.500v6l4-1z" fill="#fff" stroke="#6d6f73" /></svg></ViewButton>
          <ViewButton><svg width="9" height="9"><path d="M.500.500h6.500v7H.5z" fill="#fff" stroke="#6d7b91" /><circle cx="6.500" cy="6" r="2.300" fill="#3f8a78" /></svg></ViewButton>
          <ViewButton><svg width="8" height="8"><path d="M0 1h6M2 3.500h6M2 5.500h6M0 7.500h6" stroke="#7189ad" /></svg></ViewButton>
          <ViewButton><svg width="8" height="8"><path d="M0 1.500h8M0 3.500h8M0 5.500h8M0 7.500h8" stroke="#7189ad" /></svg></ViewButton>
        </ViewButtons>
        <ZoomArea>
          100%
          <svg width="105" height="14" fill="none" stroke="#56719c">
            <path d="M13 6.700h78" stroke="#7d9bc8" />
            <circle cx="6.500" cy="7" r="5" fill="#f3f7fd" /><path d="M3.800 7h5.500" strokeWidth="1.500" stroke="#3a4c6c" />
            <path d="M46.500 2h6v6.500l-3 3-3-3z" fill="#edf3fb" />
            <circle cx="93" cy="7" r="5" fill="#f3f7fd" /><path d="M90.200 7h5.600M93 4.200v5.600" strokeWidth="1.500" stroke="#3a4c6c" />
          </svg>
        </ZoomArea>
      </StatusBar>
      <BottomEdge />
      <Orb><OfficeOrb /></Orb>
      <BordersDialog />
      <Highlight />
      <Pointer><svg width="30" height="38"><path d="M2 36.500L16 12.500l-3-3.500L28.500 2 26.500 18l-4-2.500L2.500 36.500z" fill="#ee4543" /></svg></Pointer>
      <Watermark>
        <BrandRow><BrandLatin>Bai</BrandLatin><Paw /><BrandHan>经验</BrandHan></BrandRow>
        <BrandUrl>jingyan.baidu.com</BrandUrl>
      </Watermark>
    </Window>
  );
}
